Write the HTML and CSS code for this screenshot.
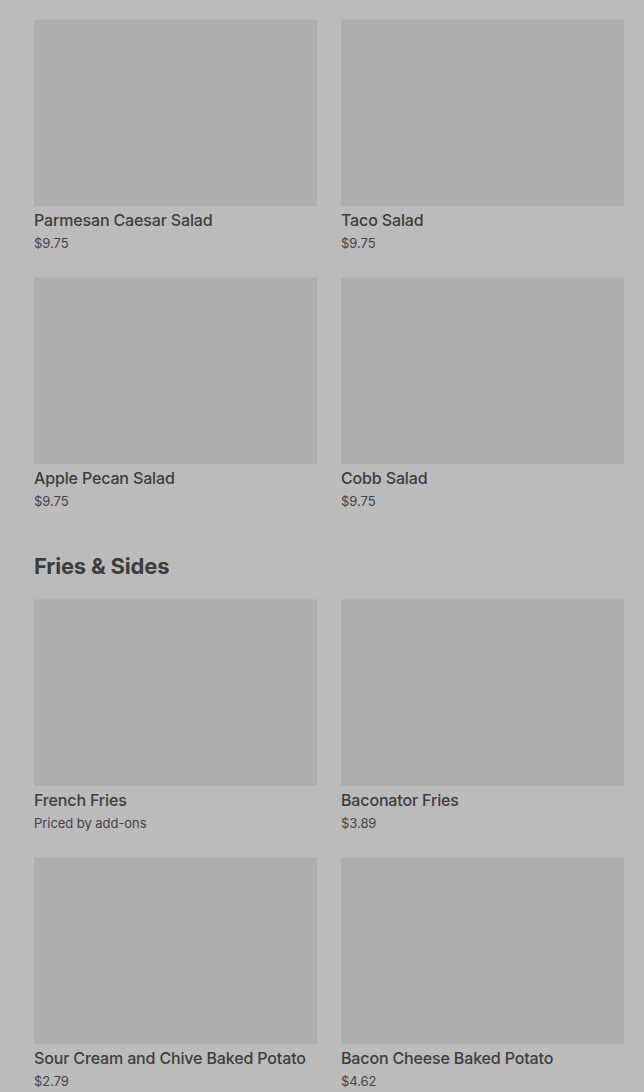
FILE: index.html
```html
<html>
<head>
    <meta charset='UTF-8'>
    <meta name='viewport' content='width=device-width, initial-scale=1.0'>
    <title>Menu</title>
    <link rel="stylesheet" href="styles.css">
</head>
<body>
    <div class='menu'>
        <div class='grid'>
            <div class='item'>
                <div class='thumb'></div>
                <div class='name'>Parmesan Caesar Salad</div>
                <div class='price'>$9.75</div>
            </div>
            <div class='item'>
                <div class='thumb'></div>
                <div class='name'>Taco Salad</div>
                <div class='price'>$9.75</div>
            </div>
            <div class='item'>
                <div class='thumb'></div>
                <div class='name'>Apple Pecan Salad</div>
                <div class='price'>$9.75</div>
            </div>
            <div class='item'>
                <div class='thumb'></div>
                <div class='name'>Cobb Salad</div>
                <div class='price'>$9.75</div>
            </div>
        </div>

        <h2 class='section-title'>Fries &amp; Sides</h2>

        <div class='grid'>
            <div class='item'>
                <div class='thumb'></div>
                <div class='name'>French Fries</div>
                <div class='price'>Priced by add-ons</div>
            </div>
            <div class='item'>
                <div class='thumb'></div>
                <div class='name'>Baconator Fries</div>
                <div class='price'>$3.89</div>
            </div>
            <div class='item'>
                <div class='thumb'></div>
                <div class='name'>Sour Cream and Chive Baked Potato</div>
                <div class='price'>$2.79</div>
            </div>
            <div class='item'>
                <div class='thumb'></div>
                <div class='name'>Bacon Cheese Baked Potato</div>
                <div class='price'>$4.62</div>
            </div>
        </div>
    </div>
</body>
</html>
```

FILE: styles.css
```css
html, body {
    margin: 0;
    padding: 0;
    background: #bbbbbb;
    color: #3d3d3d;
    font-family: 'Inter', 'Liberation Sans', sans-serif;
}

.menu {
    padding: 19px 20px 0 34px;
}

.grid {
    display: grid;
    grid-template-columns: 283px 283px;
    column-gap: 24px;
    row-gap: 23px;
}

.item {
    display: flex;
    flex-direction: column;
}

.thumb {
    height: 187px;
    background: #adadad;
    border-top: 1px solid #b4b4b4;
    box-sizing: border-box;
}

.name {
    margin-top: 3px;
    font-size: 16px;
    font-weight: 500;
    line-height: 22px;
    letter-spacing: -0.15px;
    white-space: nowrap;
}

.price {
    margin-top: 1px;
    font-size: 13px;
    line-height: 22px;
    letter-spacing: -0.05px;
    color: #444444;
}

.section-title {
    margin: 38px 0 17px 0;
    font-size: 22px;
    font-weight: 700;
    line-height: 32px;
    letter-spacing: -0.2px;
}
```
